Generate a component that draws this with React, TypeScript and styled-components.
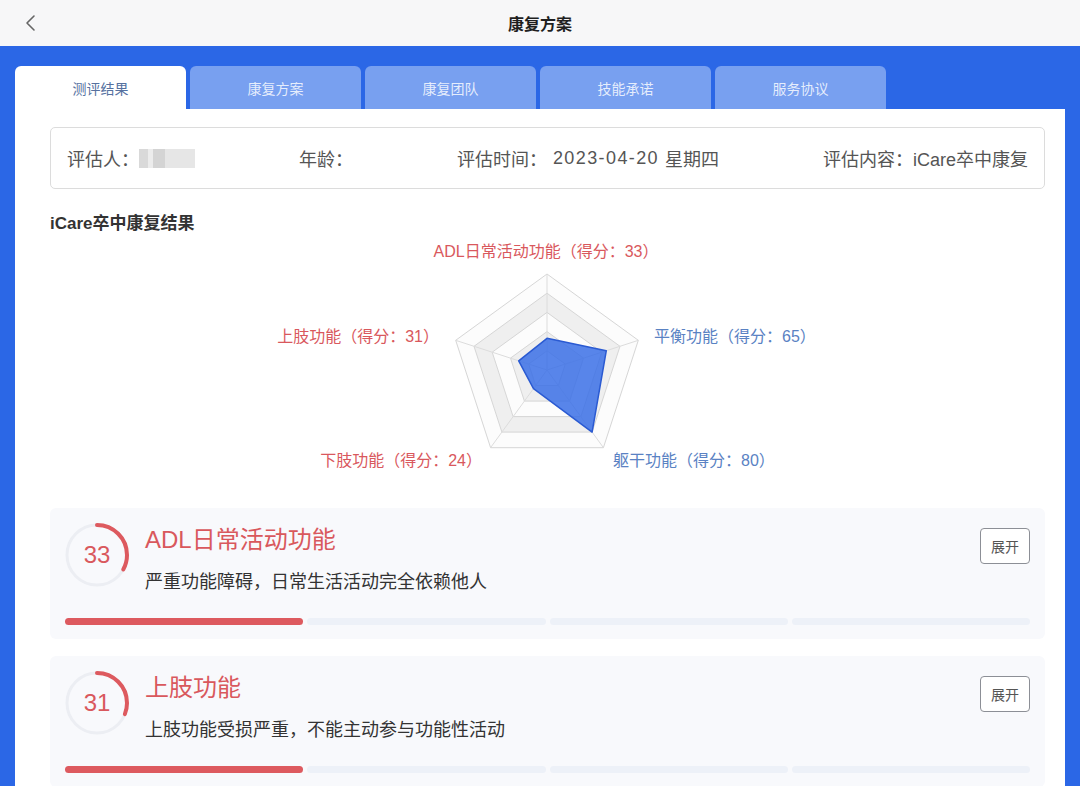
import styled, { createGlobalStyle } from "styled-components";

const GlobalStyle = createGlobalStyle`
  * {
    box-sizing: border-box;
  }
  body {
    margin: 0;
    background: #2b67e6;
    font-family: "Liberation Sans", "Noto Sans CJK SC", sans-serif;
    color: #333;
  }
`;

const RED = "#d9585d";
const BLUE_LABEL = "#5a82c3";

const tabs = ["测评结果", "康复方案", "康复团队", "技能承诺", "服务协议"];

// radar axes, clockwise from the top
const axes = [
  { name: "ADL日常活动功能", score: 33, color: RED, x: 496, y: 15, anchor: "middle" },
  { name: "平衡功能", score: 65, color: BLUE_LABEL, x: 604, y: 100, anchor: "start" },
  { name: "躯干功能", score: 80, color: BLUE_LABEL, x: 563, y: 224, anchor: "start" },
  { name: "下肢功能", score: 24, color: RED, x: 432, y: 224, anchor: "end" },
  { name: "上肢功能", score: 31, color: RED, x: 389, y: 100, anchor: "end" },
];

const results = [
  { score: 33, title: "ADL日常活动功能", desc: "严重功能障碍，日常生活活动完全依赖他人", level: 1 },
  { score: 31, title: "上肢功能", desc: "上肢功能受损严重，不能主动参与功能性活动", level: 1 },
];

const CX = 497;
const CY = 134;
const R = 96;

const point = (i: number, r: number) => {
  const a = ((-90 + i * 72) * Math.PI) / 180;
  return [CX + r * Math.cos(a), CY + r * Math.sin(a)];
};

const ring = (r: number) =>
  [0, 1, 2, 3, 4].map((i) => point(i, r).map((v) => v.toFixed(1)).join(",")).join(" ");

const Header = styled.header`
  height: 46px;
  background: #f7f7f8;
  display: grid;
  grid-template-columns: 80px 1fr 80px;
  align-items: center;
`;

const Back = styled.button`
  border: none;
  background: none;
  padding: 0 0 0 24px;
  display: flex;
  align-items: center;
  height: 46px;
`;

const Title = styled.h1`
  margin: 0;
  font-size: 16px;
  font-weight: 700;
  color: #1f1f1f;
  text-align: center;
`;

const Main = styled.main`
  padding: 20px 15px 0;
`;

const TabBar = styled.nav`
  display: flex;
  gap: 4px;
`;

const Tab = styled.div<{ $active?: boolean }>`
  width: 171px;
  height: 43px;
  border-radius: 6px 6px 0 0;
  background: ${(p) => (p.$active ? "#ffffff" : "#78a0f0")};
  color: ${(p) => (p.$active ? "#56719f" : "rgba(255, 255, 255, 0.82)")};
  font-size: 14px;
  display: flex;
  align-items: center;
  justify-content: center;
`;

const Panel = styled.section`
  background: #ffffff;
  padding: 18px 20px 40px 35px;
  min-height: 700px;
`;

const InfoBox = styled.div`
  height: 62px;
  border: 1px solid #dcdcdc;
  border-radius: 5px;
  padding: 0 16px;
  display: flex;
  align-items: center;
  justify-content: space-between;
  font-size: 18px;
  color: #555;
`;

const InfoItem = styled.div`
  display: flex;
  align-items: center;
  gap: 6px;
  white-space: nowrap;
`;

const DateText = styled.span`
  letter-spacing: 1.4px;
`;

const Blurred = styled.span`
  display: inline-block;
  width: 56px;
  height: 19px;
  margin-left: -6px;
  background: linear-gradient(
    90deg,
    #d9d9d9 0 9px,
    #ececec 9px 14px,
    #d4d4d4 14px 26px,
    #e6e6e6 26px 56px
  );
  filter: blur(0.6px);
`;

const SectionTitle = styled.h2`
  margin: 24px 0 0;
  font-size: 17px;
  line-height: 22px;
  font-weight: 700;
  color: #333;
`;

const Chart = styled.svg`
  display: block;
  width: 995px;
  height: 240px;
  margin-top: 1px;
  font-family: "Liberation Sans", "Noto Sans CJK SC", sans-serif;
`;

const Card = styled.article`
  margin-top: 32px;
  background: #f8f9fc;
  border-radius: 6px;
  padding: 15px 15px 14px 15px;

  & + & {
    margin-top: 17px;
  }
`;

const CardHead = styled.div`
  display: grid;
  grid-template-columns: 64px 1fr auto;
  column-gap: 16px;
  align-items: start;
`;

const Gauge = styled.div`
  display: grid;
  place-items: center;
  width: 64px;
  height: 64px;

  & > * {
    grid-area: 1 / 1;
  }
`;

const GaugeScore = styled.span`
  font-size: 24px;
  color: ${RED};
`;

const CardText = styled.div`
  padding-top: 1px;
`;

const CardTitle = styled.h3`
  margin: 0;
  font-size: 24px;
  line-height: 32px;
  font-weight: 400;
  color: ${RED};
`;

const CardDesc = styled.p`
  margin: 13px 0 0;
  font-size: 18px;
  line-height: 26px;
  color: #333;
`;

const Expand = styled.button`
  margin-top: 5px;
  width: 50px;
  height: 36px;
  border: 1px solid #8c8f96;
  border-radius: 4px;
  background: #ffffff;
  font-family: inherit;
  font-size: 14px;
  color: #555;
  padding: 0;
`;

const Bar = styled.div`
  margin-top: 23px;
  display: flex;
  gap: 4px;
`;

const Segment = styled.div<{ $on?: boolean }>`
  flex: 1;
  height: 7px;
  border-radius: 4px;
  background: ${(p) => (p.$on ? "#dd5a5f" : "#edf1f8")};
`;

const ScoreGauge = ({ score }: { score: number }) => {
  const r = 30;
  const c = 2 * Math.PI * r;
  return (
    <Gauge>
      <svg width="64" height="64" viewBox="0 0 64 64">
        <circle cx="32" cy="32" r={r} fill="none" stroke="#eceef3" strokeWidth="3" />
        <circle
          cx="32"
          cy="32"
          r={r}
          fill="none"
          stroke="#dd5a5f"
          strokeWidth="4"
          strokeLinecap="round"
          strokeDasharray={`${(c * score) / 100} ${c}`}
          transform="rotate(-90 32 32)"
        />
      </svg>
      <GaugeScore>{score}</GaugeScore>
    </Gauge>
  );
};

const Radar = () => {
  const levels = [5, 4, 3, 2, 1];
  const data = axes
    .map((a, i) => point(i, (R * a.score) / 100).map((v) => v.toFixed(1)).join(","))
    .join(" ");
  return (
    <Chart viewBox="0 0 995 240">
      {levels.map((l) => (
        <polygon
          key={l}
          points={ring((R * l) / 5)}
          fill={l % 2 === 0 ? "#efefef" : "#fcfcfc"}
          stroke="#d6d6d6"
          strokeWidth="1"
        />
      ))}
      {axes.map((_, i) => {
        const [x, y] = point(i, R);
        return <line key={i} x1={CX} y1={CY} x2={x} y2={y} stroke="#dcdcdc" strokeWidth="1" />;
      })}
      <polygon
        points={data}
        fill="#3b70e6"
        fillOpacity="0.85"
        stroke="#2a5ad2"
        strokeWidth="1.5"
        strokeLinejoin="round"
      />
      {axes.map((a) => (
        <text
          key={a.name}
          x={a.x}
          y={a.y}
          fill={a.color}
          fontSize="16"
          textAnchor={a.anchor as "start" | "middle" | "end"}
          dominantBaseline="central"
        >
          {a.name}（得分：{a.score}）
        </text>
      ))}
    </Chart>
  );
};

export default function App() {
  return (
    <>
      <GlobalStyle />
      <Header>
        <Back aria-label="返回">
          <svg width="12" height="18" viewBox="0 0 12 18">
            <polyline
              points="10,2 3,9 10,16"
              fill="none"
              stroke="#666"
              strokeWidth="1.6"
              strokeLinecap="round"
              strokeLinejoin="round"
            />
          </svg>
        </Back>
        <Title>康复方案</Title>
        <span />
      </Header>
      <Main>
        <TabBar>
          {tabs.map((t, i) => (
            <Tab key={t} $active={i === 0}>
              {t}
            </Tab>
          ))}
        </TabBar>
        <Panel>
          <InfoBox>
            <InfoItem>
              评估人：<Blurred />
            </InfoItem>
            <InfoItem>年龄：</InfoItem>
            <InfoItem>
              评估时间：<DateText>2023-04-20</DateText>星期四
            </InfoItem>
            <InfoItem>评估内容：iCare卒中康复</InfoItem>
          </InfoBox>
          <SectionTitle>iCare卒中康复结果</SectionTitle>
          <Radar />
          {results.map((r) => (
            <Card key={r.title}>
              <CardHead>
                <ScoreGauge score={r.score} />
                <CardText>
                  <CardTitle>{r.title}</CardTitle>
                  <CardDesc>{r.desc}</CardDesc>
                </CardText>
                <Expand>展开</Expand>
              </CardHead>
              <Bar>
                {[1, 2, 3, 4].map((s) => (
                  <Segment key={s} $on={s <= r.level} />
                ))}
              </Bar>
            </Card>
          ))}
        </Panel>
      </Main>
    </>
  );
}
